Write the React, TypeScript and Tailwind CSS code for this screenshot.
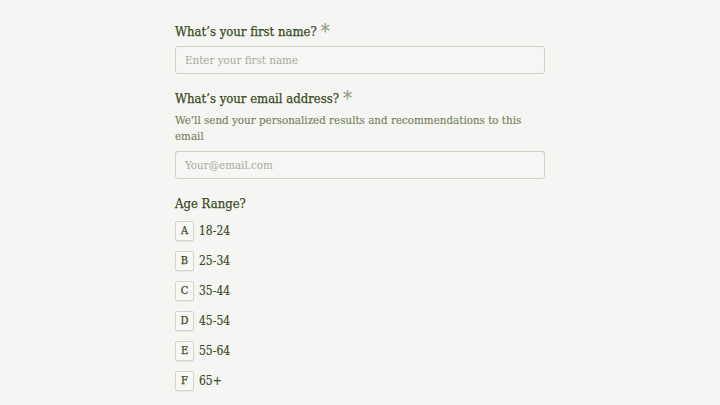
import React from 'react';

const serif = {
  fontFamily: '"DejaVu Serif Condensed", "DejaVu Serif", "Liberation Serif", serif',
  fontStretch: 'condensed',
};

const ages = [
  { key: 'A', label: '18-24' },
  { key: 'B', label: '25-34' },
  { key: 'C', label: '35-44' },
  { key: 'D', label: '45-54' },
  { key: 'E', label: '55-64' },
  { key: 'F', label: '65+' },
];

function Label({ text, required }: { text: string; required?: boolean }) {
  return (
    <div className="flex items-start gap-[4px] text-[13px] leading-[20px] text-[#3a4a1f]">
      <span className="[-webkit-text-stroke:0.25px_#3a4a1f]">{text}</span>
      {required && <span className="text-[20px] leading-[18px] text-[#8d9a7c]">*</span>}
    </div>
  );
}

export default function App() {
  return (
    <div className="min-h-[405px] w-full bg-[#f5f5f4]" style={serif}>
      <div className="mx-auto w-[370px] pt-[22px]">
        {/* First name */}
        <Label text="What’s your first name?" required />
        <input
          className="mt-[4px] block h-[28px] w-full rounded-[3px] border border-[#cfd3c2] bg-[#f6f6f4] px-[9px] text-[11.5px] text-[#3a4a1f] placeholder:text-[#a7a9a2] outline-none"
          placeholder="Enter your first name"
          style={serif}
        />

        {/* Email */}
        <div className="mt-[15px]">
          <Label text="What’s your email address?" required />
        </div>
        <p className="mt-[3px] text-[11.5px] leading-[16px] text-[#76845c] [-webkit-text-stroke:0.15px_#76845c]">
          We’ll send your personalized results and recommendations to this email
        </p>
        <input
          className="mt-[7px] block h-[28px] w-full rounded-[3px] border border-[#cfd3c2] bg-[#f6f6f4] px-[9px] text-[11.5px] text-[#3a4a1f] placeholder:text-[#a7a9a2] outline-none"
          placeholder="Your@email.com"
          style={serif}
        />

        {/* Age range */}
        <div className="mt-[15px]">
          <Label text="Age Range?" />
        </div>
        <div className="mt-[7px] flex flex-col gap-[10px]">
          {ages.map((a) => (
            <div key={a.key} className="flex items-center gap-[5px]">
              <span className="flex h-[20px] w-[19px] items-center justify-center rounded-[2px] border border-[#d3d6c8] bg-[#f8f8f6] text-[11px] text-[#3a4a1f] shadow-[0_1px_1px_rgba(0,0,0,0.06)] [-webkit-text-stroke:0.25px_#3a4a1f]">
                {a.key}
              </span>
              <span className="text-[12px] text-[#3a4a1f] [-webkit-text-stroke:0.15px_#3a4a1f]">{a.label}</span>
            </div>
          ))}
        </div>
      </div>
    </div>
  );
}
